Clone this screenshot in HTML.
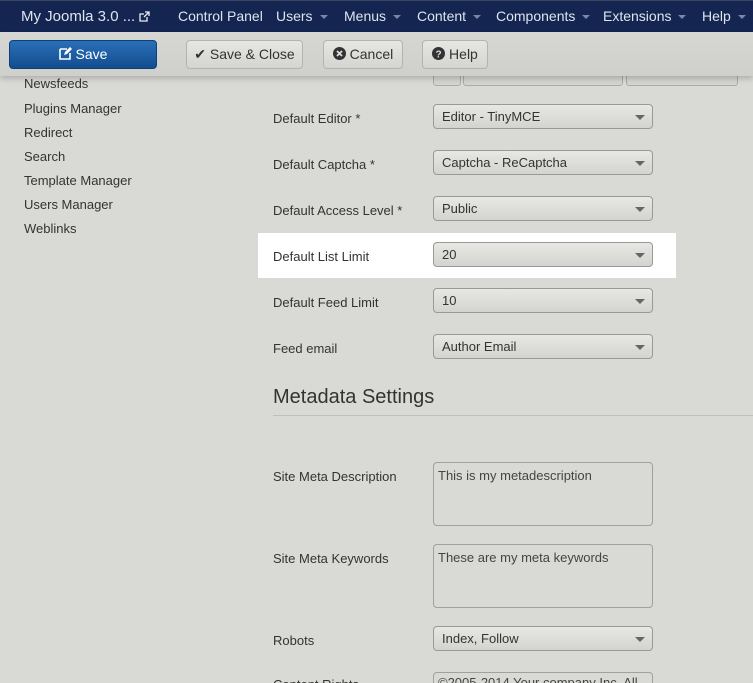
<!DOCTYPE html>
<html style="width:753px;height:683px;overflow:hidden"><head><meta charset="utf-8"><style>
*{box-sizing:border-box;margin:0;padding:0}
body{width:753px;height:683px;overflow:hidden;background:#d9dad5;font-family:"Liberation Sans",Arial,sans-serif;font-size:13px;color:#333;position:relative}
.nav{position:absolute;left:0;top:0;width:753px;height:32px;background:#132550;border-top:1px solid #3a4660}
.nav span{position:absolute;top:7px;color:#dfe4ee;font-size:14px;white-space:nowrap}
.caret{display:inline-block;width:0;height:0;border-left:4px solid transparent;border-right:4px solid transparent;border-top:4px solid #7a87a3;margin-left:7px;vertical-align:middle}
.tb{position:absolute;left:0;top:32px;width:753px;height:44px;background:linear-gradient(#d6d7d2,#cfd0cb);box-shadow:0 3px 5px rgba(0,0,0,.18);z-index:2}
.btn{position:absolute;top:8px;height:29px;border:1px solid #b3b3b0;border-radius:4px;background:linear-gradient(#e6e6e3,#d4d4d0);font-size:14px;color:#333;text-align:center;line-height:27px}
.save{background:linear-gradient(#2a6fb8,#134d8f);border-color:#0f3f78;color:#fff}
.left{position:absolute;left:24px;font-size:13px;color:#333}
.lbl{position:absolute;left:273px;font-size:13px;color:#333}
.sel{position:absolute;left:433px;width:220px;height:25px;border:1px solid #999;border-radius:4px;background:linear-gradient(#e7e8e4,#d3d4cf);padding-left:8px;line-height:23px;font-size:13px;color:#333}
.sel:after{content:"";position:absolute;right:7px;top:10px;border-left:5px solid transparent;border-right:5px solid transparent;border-top:5px solid #666}
.ta{position:absolute;left:433px;width:220px;height:64px;border:1px solid #a0a09c;border-radius:4px;background:#d9dad5;padding:5px 4px;font-size:13px;color:#444}
</style></head><body>
<div class="nav">
<span style="left:21px;font-size:15px">My Joomla 3.0 ... <svg width="11" height="11" viewBox="0 0 11 11" style="vertical-align:-1px"><path d="M6 1h4v4M10 1L5 6M8 6v4H1V3h4" fill="none" stroke="#e8ecf4" stroke-width="1.3"/></svg></span>
<span style="left:178px">Control Panel</span>
<span style="left:276px">Users<i class="caret"></i></span>
<span style="left:344px">Menus<i class="caret"></i></span>
<span style="left:417px">Content<i class="caret"></i></span>
<span style="left:496px">Components<i class="caret"></i></span>
<span style="left:603px">Extensions<i class="caret"></i></span>
<span style="left:702px">Help<i class="caret"></i></span>
</div>
<div class="tb">
<div class="btn save" style="left:9px;width:148px"><svg width="13" height="13" viewBox="0 0 13 13" style="vertical-align:-1px"><path d="M1 2h7M1 2v10h10V6" fill="none" stroke="#fff" stroke-width="1.6"/><path d="M5 8l1-3 5-5 2 2-5 5z" fill="#fff"/></svg> Save</div>
<div class="btn" style="left:186px;width:117px">&#10004; Save &amp; Close</div>
<div class="btn" style="left:323px;width:80px"><svg width="13" height="13" viewBox="0 0 13 13" style="vertical-align:-1px"><circle cx="6.5" cy="6.5" r="6.5" fill="#333"/><path d="M4 4l5 5M9 4l-5 5" stroke="#ddd" stroke-width="1.8"/></svg> Cancel</div>
<div class="btn" style="left:422px;width:66px"><svg width="13" height="13" viewBox="0 0 13 13" style="vertical-align:-1px"><circle cx="6.5" cy="6.5" r="6.5" fill="#333"/><text x="6.5" y="10.5" font-size="10" font-weight="bold" fill="#ddd" text-anchor="middle" font-family="Liberation Sans">?</text></svg> Help</div>
</div>
<div class="left" style="top:76px">Newsfeeds</div>
<div class="left" style="top:101px">Plugins Manager</div>
<div class="left" style="top:125px">Redirect</div>
<div class="left" style="top:149px">Search</div>
<div class="left" style="top:173px">Template Manager</div>
<div class="left" style="top:197px">Users Manager</div>
<div class="left" style="top:221px">Weblinks</div>
<div style="position:absolute;left:433px;top:70px;width:28px;height:16px;border:1px solid #aaa;border-radius:3px;background:#d3d4cf"></div>
<div style="position:absolute;left:463px;top:70px;width:160px;height:16px;border:1px solid #aaa;border-radius:3px;background:#d3d4cf"></div>
<div style="position:absolute;left:626px;top:70px;width:112px;height:16px;border:1px solid #aaa;border-radius:3px;background:#d3d4cf"></div>
<div style="position:absolute;left:258px;top:233px;width:418px;height:45px;background:#fff"></div>
<div class="lbl" style="top:111px">Default Editor *</div><div class="sel" style="top:104px">Editor - TinyMCE</div>
<div class="lbl" style="top:157px">Default Captcha *</div><div class="sel" style="top:150px">Captcha - ReCaptcha</div>
<div class="lbl" style="top:203px">Default Access Level *</div><div class="sel" style="top:196px">Public</div>
<div class="lbl" style="top:249px">Default List Limit</div><div class="sel" style="top:242px">20</div>
<div class="lbl" style="top:295px">Default Feed Limit</div><div class="sel" style="top:288px">10</div>
<div class="lbl" style="top:341px">Feed email</div><div class="sel" style="top:334px">Author Email</div>
<div style="position:absolute;left:273px;top:386px;font-size:20px;color:#333">Metadata Settings</div>
<div style="position:absolute;left:273px;top:415px;width:480px;height:1px;background:#bfc0bb"></div>
<div class="lbl" style="top:469px">Site Meta Description</div><div class="ta" style="top:462px">This is my metadescription</div>
<div class="lbl" style="top:551px">Site Meta Keywords</div><div class="ta" style="top:544px">These are my meta keywords</div>
<div class="lbl" style="top:633px">Robots</div><div class="sel" style="top:626px">Index, Follow</div>
<div class="lbl" style="top:677px">Content Rights</div><div class="ta" style="top:672px;height:11px;padding-top:2px;border-bottom:none;border-radius:4px 4px 0 0;overflow:hidden">©2005-2014 Your company Inc. All</div>
</body></html>
